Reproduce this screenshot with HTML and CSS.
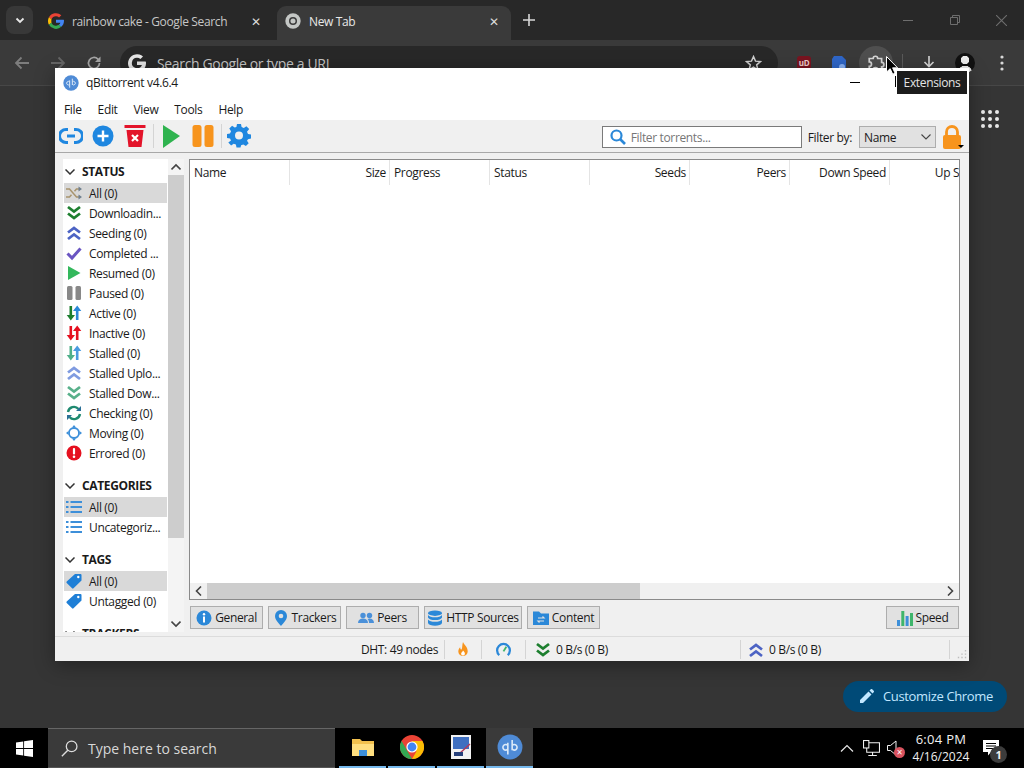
FILE: index.html
```html
<!DOCTYPE html>
<html lang="en">
<head>
    <meta charset="UTF-8">
    <title>qBittorrent v4.6.4</title>
    <link rel="stylesheet" href="styles.css">
</head>
<body>
    <svg class="sprite" width="0" height="0">
        <symbol id="i-g" viewBox="0 0 24 24">
            <path fill="#ea4335" d="M12 5a7 7 0 0 1 4.600 1.700L20 3.400A12 12 0 0 0 1.400 6.500l3.900 3A7 7 0 0 1 12 5z"/>
            <path fill="#fbbc05" d="M5 12c0-.9.100-1.700.300-2.500l-3.900-3a12 12 0 0 0 0 11l3.900-3A7 7 0 0 1 5 12z"/>
            <path fill="#34a853" d="M12 19a7 7 0 0 1-6.700-4.500l-3.900 3A12 12 0 0 0 20 20.700l-3.700-2.900A7 7 0 0 1 12 19z"/>
            <path fill="#4285f4" d="M23.500 10H12v4.700h6.600a6 6 0 0 1-2.300 3.100l3.700 2.900c2.500-2.300 4-5.600 4-9.200 0-.5 0-1-.500-1.500z"/>
        </symbol>
        <symbol id="i-gwhite" viewBox="0 0 24 24">
            <path fill="#e8e8e8" d="M12 5a7 7 0 0 1 4.600 1.700L20 3.400A12 12 0 1 0 24 12c0-.7 0-1.400-.500-2H12v4.700h6.600A7 7 0 1 1 12 5z"/>
        </symbol>
        <symbol id="i-down2" viewBox="0 0 16 16">
            <path fill="none" stroke="currentColor" stroke-width="2.800" d="M2 2l6 4.500L14 2M2 8.500L8 13l6-4.500"/>
        </symbol>
        <symbol id="i-up2" viewBox="0 0 16 16">
            <path fill="none" stroke="currentColor" stroke-width="2.800" d="M2 7.500L8 3l6 4.500M2 14L8 9.500l6 4.500"/>
        </symbol>
        <symbol id="i-shuffle" viewBox="0 0 16 16">
            <path fill="none" stroke="#a8946e" stroke-width="1.500" d="M0 4h3.500l7 8H13M0 12h3.500l2-2.300M8.500 6.300L10.500 4H13"/>
            <path fill="#6f7f8f" d="M12.500 1.500L16 4l-3.500 2.500zM12.500 9.500L16 12l-3.500 2.500z"/>
        </symbol>
        <symbol id="i-check" viewBox="0 0 16 16">
            <path fill="none" stroke="currentColor" stroke-width="3" d="M1.500 8.500L6 13 14.500 3.500"/>
        </symbol>
        <symbol id="i-play" viewBox="0 0 16 16">
            <path fill="currentColor" d="M2 1l12.500 7L2 15z"/>
        </symbol>
        <symbol id="i-pause" viewBox="0 0 16 16">
            <rect fill="currentColor" x="1" y="1" width="5.500" height="14" rx="1.500"/>
            <rect fill="currentColor" x="9.500" y="1" width="5.500" height="14" rx="1.500"/>
        </symbol>
        <symbol id="i-updown" viewBox="0 0 16 16">
            <path fill="var(--down)" d="M3.500 1h2.600v9H9l-4.200 5.500L.7 10h2.800z"/>
            <path fill="var(--up)" d="M9.900 15h2.600V6h2.800L11.200.5 7 6h2.900z"/>
        </symbol>
        <symbol id="i-sync" viewBox="0 0 16 16">
            <path fill="none" stroke="#1f8a70" stroke-width="2.400" d="M2 7a6 6 0 0 1 10.500-3M14 9a6 6 0 0 1-10.500 3"/>
            <path fill="#2a6f97" d="M15 1v5h-5zM1 15v-5h5z"/>
        </symbol>
        <symbol id="i-moving" viewBox="0 0 16 16">
            <circle cx="8" cy="8" r="5" fill="none" stroke="#3d8fd9" stroke-width="1.800"/>
            <path fill="#3d8fd9" d="M8 0l2 2.500H6zM8 16l-2-2.500h4zM0 8l2.500-2v4zM16 8l-2.500 2V6z"/>
        </symbol>
        <symbol id="i-error" viewBox="0 0 16 16">
            <circle cx="8" cy="8" r="7.500" fill="#e5101f"/>
            <rect x="6.900" y="3" width="2.200" height="6.500" rx="1" fill="#fff"/>
            <circle cx="8" cy="11.800" r="1.300" fill="#fff"/>
        </symbol>
        <symbol id="i-list" viewBox="0 0 16 16">
            <path fill="none" stroke="#3d8fd9" stroke-width="1.800" d="M0 3h2.500M4.500 3H16M0 8h2.500M4.500 8H16M0 13h2.500M4.500 13H16"/>
        </symbol>
        <symbol id="i-tag" viewBox="0 0 16 16">
            <path fill="#1f7fd6" d="M9 1h5.500a1 1 0 0 1 1 1v5.500L7.500 15.300a1 1 0 0 1-1.400 0L.7 9.900a1 1 0 0 1 0-1.400z"/>
            <circle cx="12.300" cy="4" r="1.200" fill="#fff"/>
        </symbol>
        <symbol id="i-info" viewBox="0 0 16 16">
            <circle cx="8" cy="8" r="7.500" fill="#2b88d8"/>
            <rect x="7" y="6.500" width="2" height="6" fill="#fff"/>
            <circle cx="8" cy="4.300" r="1.200" fill="#fff"/>
        </symbol>
        <symbol id="i-pin" viewBox="0 0 16 16">
            <path fill="#2b88d8" d="M8 0a6 6 0 0 1 6 6c0 4-4 7.500-6 10-2-2.500-6-6-6-10a6 6 0 0 1 6-6z"/>
            <circle cx="8" cy="6" r="2.300" fill="#e1e1e1"/>
        </symbol>
        <symbol id="i-peers" viewBox="0 0 16 16">
            <circle cx="5" cy="5.500" r="2.700" fill="#4a90d9"/>
            <circle cx="11.500" cy="5.500" r="2.700" fill="#4a90d9"/>
            <path fill="#4a90d9" d="M0 13c0-3 2-4.500 5-4.500s5 1.500 5 4.500zM11 13c0-1.700-.5-3-1.500-4 .6-.3 1.300-.5 2-.5 2.700 0 4.500 1.500 4.500 4.500z"/>
        </symbol>
        <symbol id="i-db" viewBox="0 0 16 16">
            <ellipse cx="8" cy="3.200" rx="7" ry="2.700" fill="#2b88d8"/>
            <path fill="#2b88d8" d="M1 5c1 1.700 3.800 2.300 7 2.300S14 6.700 15 5v2.500c-.5 1.700-3.500 2.600-7 2.600s-6.500-.9-7-2.600z"/>
            <path fill="#2b88d8" d="M1 9.500c1 1.700 3.800 2.300 7 2.300s6-.6 7-2.300V13c-.5 1.700-3.500 2.700-7 2.700S1.500 14.700 1 13z"/>
        </symbol>
        <symbol id="i-content" viewBox="0 0 16 16">
            <path fill="#2b88d8" d="M0 1.500h6l2 2h8v11.500H0z"/>
            <path fill="none" stroke="#e1e1e1" stroke-width="1.200" d="M5 8h6l-1.500-1.500M11 11H5l1.500 1.500"/>
        </symbol>
        <symbol id="i-bars" viewBox="0 0 16 16">
            <rect x="0" y="10" width="3" height="6" fill="#3d8fd9"/>
            <rect x="4.300" y="1" width="3" height="15" fill="#3fb56b"/>
            <rect x="8.600" y="6" width="3" height="10" fill="#3d8fd9"/>
            <rect x="13" y="3" width="3" height="13" fill="#3fb56b"/>
        </symbol>
        <symbol id="i-chrome" viewBox="0 0 24 24">
            <circle cx="12" cy="12" r="12" fill="#ea4335"/>
            <path fill="#34a853" d="M12 24A12 12 0 0 1 1.600 6l6 10.400z"/>
            <path fill="#fbbc05" d="M12 24a12 12 0 0 0 10.400-18H12l4.400 10.400z"/>
            <circle cx="12" cy="12" r="5.600" fill="#fff"/>
            <circle cx="12" cy="12" r="4.400" fill="#4285f4"/>
        </symbol>
        <symbol id="i-qb" viewBox="0 0 24 24">
            <circle cx="12" cy="12" r="11.500" fill="#4f8bd6"/>
            <path fill="none" stroke="#dbe9f8" stroke-width="1.500" d="M10 8v11M10 10.500a2.600 2.600 0 1 0 0 3.500M14 5.500V15M14 10.500a2.600 2.600 0 1 1 0 3.500"/>
        </symbol>
    </svg>

    <header class="tabstrip">
        <button class="tab-search">
            <svg viewBox="0 0 12 12" width="12" height="12"><path fill="none" stroke="#e8e8e8" stroke-width="1.800" d="M2.500 4.500L6 8l3.500-3.500"/></svg>
        </button>
        <div class="tab">
            <svg class="favicon"><use href="#i-g"/></svg>
            <span class="tab-title">rainbow cake - Google Search</span>
            <span class="tab-close">✕</span>
        </div>
        <div class="tab tab-active">
            <svg class="favicon" viewBox="0 0 24 24">
                <circle cx="12" cy="12" r="11.500" fill="#c4c7c5"/>
                <circle cx="12" cy="12" r="6" fill="#3a3a3a"/>
                <circle cx="12" cy="12" r="3.800" fill="#c4c7c5"/>
            </svg>
            <span class="tab-title">New Tab</span>
            <span class="tab-close">✕</span>
        </div>
        <svg class="new-tab" viewBox="0 0 12 12" width="12" height="12"><path stroke="#d8d8d8" stroke-width="1.600" d="M6 0v12M0 6h12"/></svg>
        <div class="caption-btns">
            <svg viewBox="0 0 10 10" width="10" height="10"><path stroke="#6e6e6e" d="M0 5.500h10"/></svg>
            <svg viewBox="0 0 10 10" width="10" height="10"><path fill="none" stroke="#6e6e6e" d="M.5 2.500h7v7h-7zM2.500 2.500v-2h7v7h-2"/></svg>
            <svg viewBox="0 0 10 10" width="11" height="11"><path stroke="#6e6e6e" d="M0 0l10 10M10 0L0 10"/></svg>
        </div>
    </header>

    <nav class="chrome-toolbar">
        <svg class="nav-icon" viewBox="0 0 16 16"><path fill="none" stroke="#7d7d7d" stroke-width="1.800" d="M15 8H2M7.500 2.500L2 8l5.500 5.500"/></svg>
        <svg class="nav-icon" viewBox="0 0 16 16"><path fill="none" stroke="#666" stroke-width="1.800" d="M1 8h13M8.500 2.500L14 8l-5.500 5.500"/></svg>
        <svg class="nav-icon" viewBox="0 0 16 16"><path fill="none" stroke="#a8a8a8" stroke-width="1.700" d="M13.500 8a5.500 5.500 0 1 1-1.600-3.900L13.500 6"/><path fill="#a8a8a8" d="M14.500 1.500v5.500h-5.500z"/></svg>
        <div class="omnibox">
            <svg class="omni-g"><use href="#i-gwhite"/></svg>
            <span class="omni-text">Search Google or type a URL</span>
            <svg class="omni-star" viewBox="0 0 16 16"><path fill="none" stroke="#d0d0d0" stroke-width="1.400" d="M8 1.500l1.900 4.300 4.600.4-3.500 3.100 1.100 4.600L8 11.500l-4.100 2.400L5 9.300 1.500 6.200l4.600-.4z"/></svg>
        </div>
        <div class="ext-icons">
            <span class="ext ext-ub">uD</span>
            <svg class="ext-svg" viewBox="0 0 16 16"><path fill="#2f67c9" d="M3 1h8l4 4v9H1V4z"/><circle cx="11" cy="12" r="3" fill="#8ab4f8"/></svg>
            <span class="ext-active">
                <svg viewBox="0 0 16 16" width="18" height="18"><path fill="none" stroke="#d8d8d8" stroke-width="1.500" d="M2 4h3.500a2 2 0 0 1 4 0H13v3.500a2 2 0 0 1 0 4V14H9.500a2 2 0 0 0-4 0H2v-3a2 2 0 0 0 0-4z"/></svg>
            </span>
            <span class="tb-sep"></span>
            <svg class="ext-svg" viewBox="0 0 16 16"><path fill="none" stroke="#d8d8d8" stroke-width="1.600" d="M8 1v10M3.500 7L8 11.500 12.500 7M2 14.500h12"/></svg>
            <span class="avatar"></span>
            <svg class="kebab" viewBox="0 0 4 16" width="4" height="16"><circle cx="2" cy="2" r="1.600" fill="#d8d8d8"/><circle cx="2" cy="8" r="1.600" fill="#d8d8d8"/><circle cx="2" cy="14" r="1.600" fill="#d8d8d8"/></svg>
        </div>
    </nav>

    <main class="ntp">
        <div class="apps-grid">
            <i></i><i></i><i></i><i></i><i></i><i></i><i></i><i></i><i></i>
        </div>
        <button class="customize">
            <svg viewBox="0 0 14 14" width="14" height="14"><path fill="#c2e7ff" d="M0 14v-3L8.500 2.500l3 3L3 14zM9.500 1.500L10.800.3a1 1 0 0 1 1.400 0l1.500 1.500a1 1 0 0 1 0 1.400L12.500 4.500z"/></svg>
            Customize Chrome
        </button>
    </main>

    <footer class="taskbar">
        <div class="start">
            <svg viewBox="0 0 16 16" width="17" height="17"><path fill="#fff" d="M0 2.300l6.800-1v6.300H0zM7.600 1.200L16 0v7.600H7.600zM0 8.400h6.800v6.300l-6.800-1zM7.600 8.400H16V16l-8.400-1.200z"/></svg>
        </div>
        <div class="task-search">
            <svg viewBox="0 0 16 16" width="17" height="17"><circle cx="10" cy="6" r="5" fill="none" stroke="#ddd" stroke-width="1.200"/><path stroke="#ddd" stroke-width="1.300" d="M6.400 9.600L.8 15.200"/></svg>
            <span>Type here to search</span>
        </div>
        <div class="task-app">
            <svg viewBox="0 0 24 24" width="24" height="24">
                <path fill="#f2c14e" d="M1 4h8l2 2h12v15H1z"/>
                <path fill="#ffdf80" d="M1 9h22v12H1z"/>
                <rect x="8" y="15" width="8" height="6" fill="#3d8fd9"/>
            </svg>
        </div>
        <div class="task-app">
            <svg width="24" height="24"><use href="#i-chrome"/></svg>
        </div>
        <div class="task-app">
            <svg viewBox="0 0 20 24" width="20" height="24">
                <rect width="20" height="24" fill="#f2f2f2"/>
                <rect x="2" y="2" width="16" height="12" fill="#3f6fc0"/>
                <path stroke="#b03a5a" stroke-width="1.500" d="M19 9L8 19"/>
                <rect x="3" y="17" width="9" height="4" fill="#27407a"/>
            </svg>
        </div>
        <div class="task-app task-active">
            <svg width="26" height="26"><use href="#i-qb"/></svg>
        </div>
        <div class="tray">
            <svg viewBox="0 0 14 8" width="14" height="8"><path fill="none" stroke="#e8e8e8" stroke-width="1.200" d="M1 7.500L7 1.500l6 6"/></svg>
            <svg viewBox="0 0 16 16" width="17" height="17"><path fill="none" stroke="#f0f0f0" d="M3.500 2.500h12v9h-12zM9 11.500v3M5 14.500h8"/><rect x=".5" y=".5" width="5" height="7" fill="#000" stroke="#f0f0f0"/></svg>
            <span class="tray-sound">
                <svg viewBox="0 0 10 16" width="10" height="16"><path fill="none" stroke="#f0f0f0" d="M.5 5.500h3L9 1v14l-5.500-4.500h-3z"/></svg>
                <i class="mute-dot">×</i>
            </span>
            <div class="clock"><span class="clock-time">6:04 PM</span><span>4/16/2024</span></div>
            <span class="notif">
                <svg viewBox="0 0 16 16" width="16" height="16"><path fill="#fff" d="M0 0h16v12H8l-3 3.500V12H0z"/><path stroke="#000" d="M3 3.500h10M3 6h10M3 8.500h7"/></svg>
                <b class="notif-count">1</b>
            </span>
        </div>
    </footer>

    <!-- qbittorrent window on top of chrome -->
    <section class="qbt">
        <div class="qbt-title">
            <svg width="16" height="16"><use href="#i-qb"/></svg>
            <span>qBittorrent v4.6.4</span>
            <i class="qbt-min"></i>
            <i class="qbt-max"></i>
        </div>
        <div class="qbt-menu">
            <span>File</span><span>Edit</span><span>View</span><span>Tools</span><span>Help</span>
        </div>
        <div class="qbt-toolbar">
            <span class="tool">
                <svg viewBox="0 0 24 24" width="24" height="24"><path fill="none" stroke="#1f87e0" stroke-width="3" d="M9 5.500H7a6.500 6.500 0 0 0 0 13h2M15 5.500h2a6.500 6.500 0 0 1 0 13h-2M8 12h8"/></svg>
            </span>
            <span class="tool">
                <svg viewBox="0 0 24 24" width="24" height="24"><circle cx="12" cy="12" r="10.500" fill="#1f87e0"/><path stroke="#fff" stroke-width="2.400" d="M12 6.500v11M6.500 12h11"/></svg>
            </span>
            <span class="tool">
                <svg viewBox="0 0 24 24" width="24" height="24"><path fill="#e3142a" d="M1.500 1h21v3h-21zM3.500 6h17l-2 17h-13z"/><path stroke="#fff" stroke-width="2.200" d="M9 11l6 6M15 11l-6 6"/></svg>
            </span>
            <i class="tool-sep"></i>
            <span class="tool">
                <svg viewBox="0 0 24 24" width="24" height="24"><path fill="#2fb34f" d="M4 1l17 11L4 24z"/></svg>
            </span>
            <span class="tool">
                <svg viewBox="0 0 24 24" width="24" height="24"><rect x="1.500" y="1" width="9" height="22" rx="2.500" fill="#f7941d"/><rect x="13.500" y="1" width="9" height="22" rx="2.500" fill="#f7941d"/></svg>
            </span>
            <i class="tool-sep"></i>
            <span class="tool">
                <svg viewBox="0 0 24 24" width="24" height="24"><path fill="#1f87e0" fill-rule="evenodd" d="M10 1h4l.6 3 2.200 1 2.600-1.700 2.800 2.800L20 8.700l1 2.300 3 .6v4l-3 .6-1 1.500 1.700 2.600-2.800 2.800-2.600-1.700-2.200.9-.6 2.200h-4l-.6-2.900-2.200-.9-2.600 1.700-2.800-2.800L4 17.500 3 15.500 0 15v-4l3-.6 1-2.200L2.300 5.600l2.800-2.800 2.600 1.700L9.400 3.900zM12 8.500a4 4 0 1 0 0 8 4 4 0 0 0 0-8z" transform="translate(0 -1)"/></svg>
            </span>
            <div class="filter-group">
                <div class="filter-input">
                    <svg viewBox="0 0 16 16" width="16" height="16"><circle cx="6.500" cy="6.500" r="5" fill="none" stroke="#2b88d8" stroke-width="2.200"/><path stroke="#2b88d8" stroke-width="2.600" d="M10 10l5 5"/></svg>
                    <span>Filter torrents...</span>
                </div>
                <span class="filter-label">Filter by:</span>
                <div class="filter-combo">
                    <span>Name</span>
                    <svg viewBox="0 0 10 6" width="10" height="6"><path fill="none" stroke="#444" stroke-width="1.100" d="M.5.500L5 5 9.500.500"/></svg>
                </div>
                <span class="lock">
                    <svg viewBox="0 0 20 24" width="20" height="24"><path fill="none" stroke="#f7941d" stroke-width="2.800" d="M4.500 11V7a5.500 5.500 0 0 1 11 0v4"/><rect x="1" y="10" width="18" height="14" rx="2" fill="#f7941d"/></svg>
                    <i class="lock-arrow"></i>
                </span>
            </div>
        </div>

        <div class="qbt-body">
            <aside class="side">
                <div class="side-list">
                    <h4 class="side-head"><svg class="caret" viewBox="0 0 10 6"><path fill="none" stroke="#333" stroke-width="1.500" d="M.5.500L5 5 9.500.500"/></svg>STATUS</h4>
                    <div class="side-row selected"><svg><use href="#i-shuffle"/></svg>All (0)</div>
                    <div class="side-row"><svg class="c-green"><use href="#i-down2"/></svg>Downloadin...</div>
                    <div class="side-row"><svg class="c-indigo"><use href="#i-up2"/></svg>Seeding (0)</div>
                    <div class="side-row"><svg class="c-purple"><use href="#i-check"/></svg>Completed ...</div>
                    <div class="side-row"><svg class="c-play"><use href="#i-play"/></svg>Resumed (0)</div>
                    <div class="side-row"><svg class="c-grey"><use href="#i-pause"/></svg>Paused (0)</div>
                    <div class="side-row"><svg class="arrows-active"><use href="#i-updown"/></svg>Active (0)</div>
                    <div class="side-row"><svg class="arrows-inactive"><use href="#i-updown"/></svg>Inactive (0)</div>
                    <div class="side-row"><svg class="arrows-stalled"><use href="#i-updown"/></svg>Stalled (0)</div>
                    <div class="side-row"><svg class="c-lightblue"><use href="#i-up2"/></svg>Stalled Uplo...</div>
                    <div class="side-row"><svg class="c-lightgreen"><use href="#i-down2"/></svg>Stalled Dow...</div>
                    <div class="side-row"><svg><use href="#i-sync"/></svg>Checking (0)</div>
                    <div class="side-row"><svg><use href="#i-moving"/></svg>Moving (0)</div>
                    <div class="side-row"><svg><use href="#i-error"/></svg>Errored (0)</div>

                    <h4 class="side-head"><svg class="caret" viewBox="0 0 10 6"><path fill="none" stroke="#333" stroke-width="1.500" d="M.5.500L5 5 9.500.500"/></svg>CATEGORIES</h4>
                    <div class="side-row selected"><svg><use href="#i-list"/></svg>All (0)</div>
                    <div class="side-row"><svg><use href="#i-list"/></svg>Uncategoriz...</div>

                    <h4 class="side-head"><svg class="caret" viewBox="0 0 10 6"><path fill="none" stroke="#333" stroke-width="1.500" d="M.5.500L5 5 9.500.500"/></svg>TAGS</h4>
                    <div class="side-row selected"><svg><use href="#i-tag"/></svg>All (0)</div>
                    <div class="side-row"><svg><use href="#i-tag"/></svg>Untagged (0)</div>

                    <h4 class="side-head"><svg class="caret" viewBox="0 0 10 6"><path fill="none" stroke="#333" stroke-width="1.500" d="M.5.500L5 5 9.500.500"/></svg>TRACKERS</h4>
                </div>
                <div class="side-scroll">
                    <svg class="arrow-btn" viewBox="0 0 10 6"><path fill="none" stroke="#444" stroke-width="1.600" d="M.5 5.500L5 1l4.500 4.500"/></svg>
                    <div class="side-track"><div class="side-thumb"></div></div>
                    <svg class="arrow-btn" viewBox="0 0 10 6"><path fill="none" stroke="#444" stroke-width="1.600" d="M.5.500L5 5 9.500.500"/></svg>
                </div>
            </aside>

            <div class="content">
                <div class="table">
                    <div class="table-head">
                        <span class="col">Name</span>
                        <span class="col col-r">Size</span>
                        <span class="col">Progress</span>
                        <span class="col">Status</span>
                        <span class="col col-r">Seeds</span>
                        <span class="col col-r">Peers</span>
                        <span class="col col-r">Down Speed</span>
                        <span class="col col-r">Up Speed</span>
                    </div>
                    <div class="table-rows"></div>
                    <div class="hscroll">
                        <svg class="harrow" viewBox="0 0 6 10"><path fill="none" stroke="#444" stroke-width="1.600" d="M5.500.500L1 5l4.500 4.500"/></svg>
                        <div class="htrack"><div class="hthumb"></div></div>
                        <svg class="harrow" viewBox="0 0 6 10"><path fill="none" stroke="#444" stroke-width="1.600" d="M.5.500L5 5 .5 9.500"/></svg>
                    </div>
                </div>
                <div class="tabs">
                    <button class="tab-btn"><svg><use href="#i-info"/></svg>General</button>
                    <button class="tab-btn"><svg><use href="#i-pin"/></svg>Trackers</button>
                    <button class="tab-btn"><svg><use href="#i-peers"/></svg>Peers</button>
                    <button class="tab-btn tab-wide"><svg><use href="#i-db"/></svg>HTTP Sources</button>
                    <button class="tab-btn"><svg><use href="#i-content"/></svg>Content</button>
                    <button class="tab-btn tab-speed"><svg><use href="#i-bars"/></svg>Speed</button>
                </div>
            </div>
        </div>

        <div class="qbt-status">
            <span class="st st-dht">DHT: 49 nodes</span>
            <span class="st st-icon">
                <svg viewBox="0 0 12 16" width="12" height="15"><path fill="#f7941d" d="M6 0c1 3 5 5 5 10a5 5 0 0 1-10 0c0-2 1-3.500 2-4.500 0 1.500.5 2.500 1.500 2.500C5.500 6 5 3 6 0z"/><path fill="#fff" d="M6 9c1 1 2 2 2 3.500a2 2 0 0 1-4 0C4 11 5.500 10.500 6 9z"/></svg>
            </span>
            <span class="st st-icon st-gauge">
                <svg viewBox="0 0 16 16" width="15" height="15"><path fill="none" stroke="#2b88d8" stroke-width="2.400" d="M3.500 14a6.800 6.800 0 1 1 9 0"/><path stroke="#3fb56b" stroke-width="2" d="M8 10l3-5"/></svg>
            </span>
            <span class="st st-speed"><svg class="c-green"><use href="#i-down2"/></svg>0 B/s (0 B)</span>
            <span class="st st-speed st-up"><svg class="c-indigo"><use href="#i-up2"/></svg>0 B/s (0 B)</span>
            <span class="st st-grip">
                <svg viewBox="0 0 10 10" width="10" height="10"><path stroke="#bdbdbd" stroke-width="1.400" stroke-dasharray="1.400 2" d="M8.500 0v10M5 3.400v6.600M1.500 6.800V10"/></svg>
            </span>
        </div>
    </section>

    <div class="ext-tooltip">Extensions</div>
    <svg class="cursor" viewBox="0 0 12 19" width="12" height="19"><path fill="#000" stroke="#fff" d="M.5.500v15.500l3.700-3.300 2.500 5.500 2.400-1-2.500-5.400h5z"/></svg>
</body>
</html>
```

FILE: styles.css
```css
* {
    box-sizing: border-box;
}

body {
    margin: 0;
    width: 1024px;
    height: 768px;
    position: relative;
    overflow: hidden;
    display: flex;
    flex-direction: column;
    background: #353535;
    font-family: "Open Sans", "Noto Sans", sans-serif;
    font-size: 12px;
    letter-spacing: -0.35px;
    color: #1a1a1a;
}

button {
    font: inherit;
    letter-spacing: inherit;
    border: none;
    padding: 0;
}

.sprite {
    position: absolute;
}

/* chrome tab strip */
.tabstrip {
    height: 40px;
    flex: none;
    display: flex;
    align-items: flex-end;
    background: #282828;
    padding-left: 6px;
}

.tab-search {
    width: 27px;
    height: 28px;
    margin-bottom: 6px;
    background: #383838;
    border-radius: 8px;
    display: flex;
    align-items: center;
    justify-content: center;
}

.tab {
    width: 232px;
    height: 34px;
    margin-left: 7px;
    padding: 0 11px 4px 8px;
    display: flex;
    align-items: center;
    color: #c7c7c7;
}

.tab + .tab {
    margin-left: 5px;
}

.tab-active {
    width: 234px;
    background: #3a3a3a;
    border-radius: 9px 9px 0 0;
    color: #e8e8e8;
    padding-right: 12px;
}

.favicon {
    width: 16px;
    height: 16px;
    flex: none;
    margin-right: 8px;
}

.tab-title {
    flex: 1;
    white-space: nowrap;
    overflow: hidden;
}

.tab-close {
    font-size: 12px;
    color: #dcdcdc;
}

.new-tab {
    margin: 0 0 14px 12px;
}

.caption-btns {
    margin-left: auto;
    height: 40px;
    width: 138px;
    padding: 0 17px;
    display: flex;
    align-items: center;
    justify-content: space-between;
}

/* chrome toolbar */
.chrome-toolbar {
    height: 46px;
    flex: none;
    display: flex;
    align-items: flex-start;
    background: #3a3a3a;
    border-bottom: 1px solid #474747;
    padding: 6px 14px 0 14px;
}

.nav-icon {
    width: 16px;
    height: 16px;
    margin: 9px 20px 0 0;
}

.omnibox {
    width: 658px;
    height: 34px;
    margin-left: -2px;
    padding: 0 16px 0 8px;
    background: #282828;
    border-radius: 17px;
    display: flex;
    align-items: center;
    font-size: 14px;
    color: #c7c7c7;
}

.omni-g {
    width: 18px;
    height: 18px;
    margin-right: 11px;
}

.omni-text {
    flex: 1;
}

.omni-star {
    width: 17px;
    height: 17px;
}

.ext-icons {
    flex: 1;
    display: flex;
    align-items: center;
    height: 34px;
    padding-left: 19px;
}

.ext {
    width: 14px;
    height: 14px;
    background: #7a1420;
    border-radius: 3px;
    color: #f4d0d0;
    font-size: 8px;
    font-weight: 700;
    text-align: center;
    line-height: 14px;
}

.ext-svg {
    width: 16px;
    height: 16px;
    margin-left: 20px;
}

.ext-active {
    width: 34px;
    height: 34px;
    margin-left: 12px;
    border-radius: 50%;
    background: #4f4f4f;
    display: flex;
    align-items: center;
    justify-content: center;
}

.tb-sep {
    width: 1px;
    height: 18px;
    margin-left: 9px;
    background: #5a5a5a;
}

.tb-sep + .ext-svg {
    margin-left: 18px;
}

.avatar {
    width: 20px;
    height: 20px;
    margin-left: 18px;
    border-radius: 50%;
    background: radial-gradient(circle at 50% 35%, #eee 0 4px, transparent 4.500px), radial-gradient(circle at 50% 100%, #eee 0 7px, #111 7.500px);
}

.kebab {
    margin-left: 25px;
}

/* new tab page behind the window */
.ntp {
    flex: 1;
    position: relative;
}

.apps-grid {
    position: absolute;
    top: 24px;
    left: 981px;
    display: grid;
    grid-template-columns: repeat(3, 4px);
    gap: 3px;
}

.apps-grid i {
    height: 4px;
    background: #e8e8e8;
    border-radius: 50%;
}

.customize {
    position: absolute;
    left: 843px;
    top: 595px;
    width: 164px;
    height: 31px;
    border-radius: 16px;
    background: #004a77;
    color: #c2e7ff;
    font-size: 13px;
    display: flex;
    align-items: center;
    gap: 9px;
    padding: 0 0 1px 17px;
}

/* taskbar */
.taskbar {
    height: 40px;
    flex: none;
    display: flex;
    background: #000;
    color: #f0f0f0;
}

.start {
    width: 48px;
    display: flex;
    align-items: center;
    justify-content: center;
}

.task-search {
    width: 287px;
    background: #3a3a3a;
    border-top: 1px solid #666;
    border-bottom: 1px solid #555;
    display: flex;
    align-items: center;
    gap: 10px;
    padding-left: 13px;
    font-size: 14px;
    letter-spacing: 0;
    color: #d8d8d8;
}

.task-app {
    width: 47px;
    margin-left: 2px;
    display: flex;
    align-items: center;
    justify-content: center;
    border-bottom: 2px solid #76b9ed;
}

.task-search + .task-app {
    margin-left: 4px;
}

.task-active {
    background: #3a3a3a;
}

.tray {
    flex: 1;
    display: flex;
    align-items: center;
    padding-left: 307px;
}

.tray > svg:first-child {
    margin-right: 9px;
}

.tray-sound {
    position: relative;
    margin-left: 7px;
    display: flex;
}

.mute-dot {
    position: absolute;
    left: 7px;
    top: 7px;
    width: 11px;
    height: 11px;
    border-radius: 50%;
    background: #d9535f;
    color: #fff;
    font-style: normal;
    font-size: 10px;
    line-height: 10px;
    text-align: center;
}

.clock {
    width: 76px;
    margin-left: 6px;
    display: flex;
    flex-direction: column;
    align-items: center;
    gap: 2px;
    line-height: 15px;
    letter-spacing: 0;
}

.clock-time {
    font-size: 13px;
    letter-spacing: 0.3px;
}

.notif {
    position: relative;
    margin-left: 4px;
    display: flex;
}

.notif-count {
    position: absolute;
    left: 7px;
    top: 6px;
    width: 17px;
    height: 17px;
    border-radius: 50%;
    background: #3c3c3c;
    text-align: center;
    font-size: 11px;
    line-height: 17px;
}

/* qbittorrent window */
.qbt {
    position: absolute;
    left: 55px;
    top: 68px;
    width: 914px;
    height: 593px;
    display: flex;
    flex-direction: column;
    background: #f0f0f0;
    box-shadow: 0 4px 18px rgba(0, 0, 0, 0.35);
}

.qbt-title {
    height: 29px;
    flex: none;
    background: #fff;
    display: flex;
    align-items: center;
    gap: 7px;
    padding-left: 8px;
    position: relative;
}

.qbt-min {
    position: absolute;
    left: 795px;
    top: 14px;
    width: 10px;
    height: 1px;
    background: #000;
}

.qbt-max {
    position: absolute;
    left: 840px;
    top: 8px;
    width: 1px;
    height: 11px;
    background: #000;
}

.qbt-menu {
    height: 23px;
    flex: none;
    background: #fff;
    display: flex;
    align-items: center;
    padding: 2px 0 0 9px;
    gap: 16px;
}

.qbt-toolbar {
    height: 33px;
    flex: none;
    display: flex;
    align-items: center;
    border-bottom: 1px solid #a8a8a8;
}

.tool {
    width: 32px;
    height: 32px;
    display: flex;
    align-items: center;
    justify-content: center;
}

.tool-sep {
    width: 1px;
    height: 24px;
    margin: 0 1px 0 2px;
    background: #d4d4d4;
}

.filter-group {
    margin-left: auto;
    display: flex;
    align-items: center;
    padding: 2px 5px 0 0;
}

.filter-input {
    width: 200px;
    height: 22px;
    background: #fff;
    border: 1px solid #7a7a7a;
    display: flex;
    align-items: center;
    gap: 5px;
    padding-left: 7px;
    color: #767676;
}

.filter-label {
    margin: 0 7px 0 6px;
}

.filter-combo {
    width: 77px;
    height: 22px;
    background: #e1e1e1;
    border: 1px solid #adadad;
    display: flex;
    align-items: center;
    justify-content: space-between;
    padding: 0 4px;
}

.lock {
    position: relative;
    margin-left: 6px;
    display: flex;
    width: 22px;
}

.lock-arrow {
    position: absolute;
    right: 0;
    bottom: 1px;
    border: 3px solid transparent;
    border-top-color: #000;
    border-bottom: none;
}

.qbt-body {
    flex: 1;
    min-height: 0;
    display: flex;
    padding: 6px 9px 0 8px;
    gap: 5px;
    border-bottom: 1px solid #dcdcdc;
}

.side {
    width: 121px;
    flex: none;
    display: flex;
    height: 473px;
}

.side-list {
    width: 105px;
    background: #fff;
    overflow: hidden;
    padding-top: 1px;
}

.side-head {
    margin: 11px 0 0;
    height: 23px;
    font-size: 12px;
    font-weight: 700;
    display: flex;
    align-items: center;
    padding-left: 2px;
}

.side-head:first-child {
    margin-top: 0;
}

.caret {
    width: 10px;
    height: 6px;
    margin-right: 7px;
}

.side-row {
    height: 20px;
    margin: 0 1px;
    display: flex;
    align-items: center;
    gap: 7px;
    padding-left: 2px;
    white-space: nowrap;
}

.side-row svg,
.tab-btn svg,
.st-speed svg {
    width: 16px;
    height: 16px;
    flex: none;
}

.selected {
    background: #d9d9d9;
}

.c-green { color: #1d7f2f; }
.c-indigo { color: #4c63c4; }
.c-purple { color: #6a55c2; }
.c-play { color: #33b85c; }
.c-grey { color: #888; }
.c-lightblue { color: #7f9be0; }
.c-lightgreen { color: #58b08a; }

.arrows-active { --down: #1d7f2f; --up: #2b88d8; }
.arrows-inactive { --down: #e5101f; --up: #e5101f; }
.arrows-stalled { --down: #4fb08a; --up: #4a9be0; }

.side-scroll {
    width: 16px;
    background: #f4f4f4;
    display: flex;
    flex-direction: column;
    align-items: center;
}

.arrow-btn {
    width: 10px;
    height: 16px;
    flex: none;
}

.side-track {
    flex: 1;
    width: 16px;
}

.side-thumb {
    height: 363px;
    background: #cdcdcd;
}

.content {
    flex: 1;
    min-width: 0;
    display: flex;
    flex-direction: column;
}

.table {
    height: 441px;
    flex: none;
    background: #fff;
    border: 1px solid #8a8a8a;
    display: flex;
    flex-direction: column;
    overflow: hidden;
}

.table-head {
    height: 25px;
    flex: none;
    display: flex;
}

.col {
    width: 100px;
    flex: none;
    border-right: 1px solid #e4e4e4;
    padding: 0 3px 0 4px;
    line-height: 25px;
}

.col-r {
    text-align: right;
}

.table-rows {
    flex: 1;
}

.hscroll {
    height: 16px;
    flex: none;
    display: flex;
    align-items: center;
    background: #f0f0f0;
}

.harrow {
    width: 17px;
    height: 10px;
    flex: none;
}

.htrack {
    flex: 1;
    height: 16px;
}

.hthumb {
    width: 433px;
    height: 16px;
    background: #cdcdcd;
}

.tabs {
    display: flex;
    gap: 5px;
    margin: 6px 1px 0;
}

.tab-btn {
    width: 73px;
    height: 23px;
    background: #e1e1e1;
    border: 1px solid #adadad;
    display: flex;
    align-items: center;
    justify-content: center;
    gap: 3px;
    color: #1a1a1a;
    white-space: nowrap;
}

.tab-wide {
    width: 98px;
}

.tab-speed {
    margin-left: auto;
}

.qbt-status {
    height: 24px;
    flex: none;
    display: flex;
    align-items: center;
    padding: 1px 0 0 306px;
}

.st {
    height: 19px;
    display: flex;
    align-items: center;
    border-right: 1px solid #d4d4d4;
}

.st-dht {
    width: 84px;
}

.st-icon {
    width: 37px;
    justify-content: center;
}

.st-gauge {
    width: 44px;
}

.st-speed {
    width: 215px;
    gap: 5px;
    padding-left: 9px;
}

.st-up {
    width: 209px;
    padding-left: 7px;
}

.st-grip {
    flex: 1;
    border-right: none;
    height: 24px;
    justify-content: flex-end;
    align-items: flex-end;
    padding: 0 2px 2px 0;
}

/* hover tooltip and mouse pointer */
.ext-tooltip {
    position: absolute;
    left: 897px;
    top: 71px;
    width: 70px;
    height: 23px;
    background: #1c1c1c;
    color: #e4e4e4;
    text-align: center;
    line-height: 23px;
}

.cursor {
    position: absolute;
    left: 886px;
    top: 56px;
}
```
